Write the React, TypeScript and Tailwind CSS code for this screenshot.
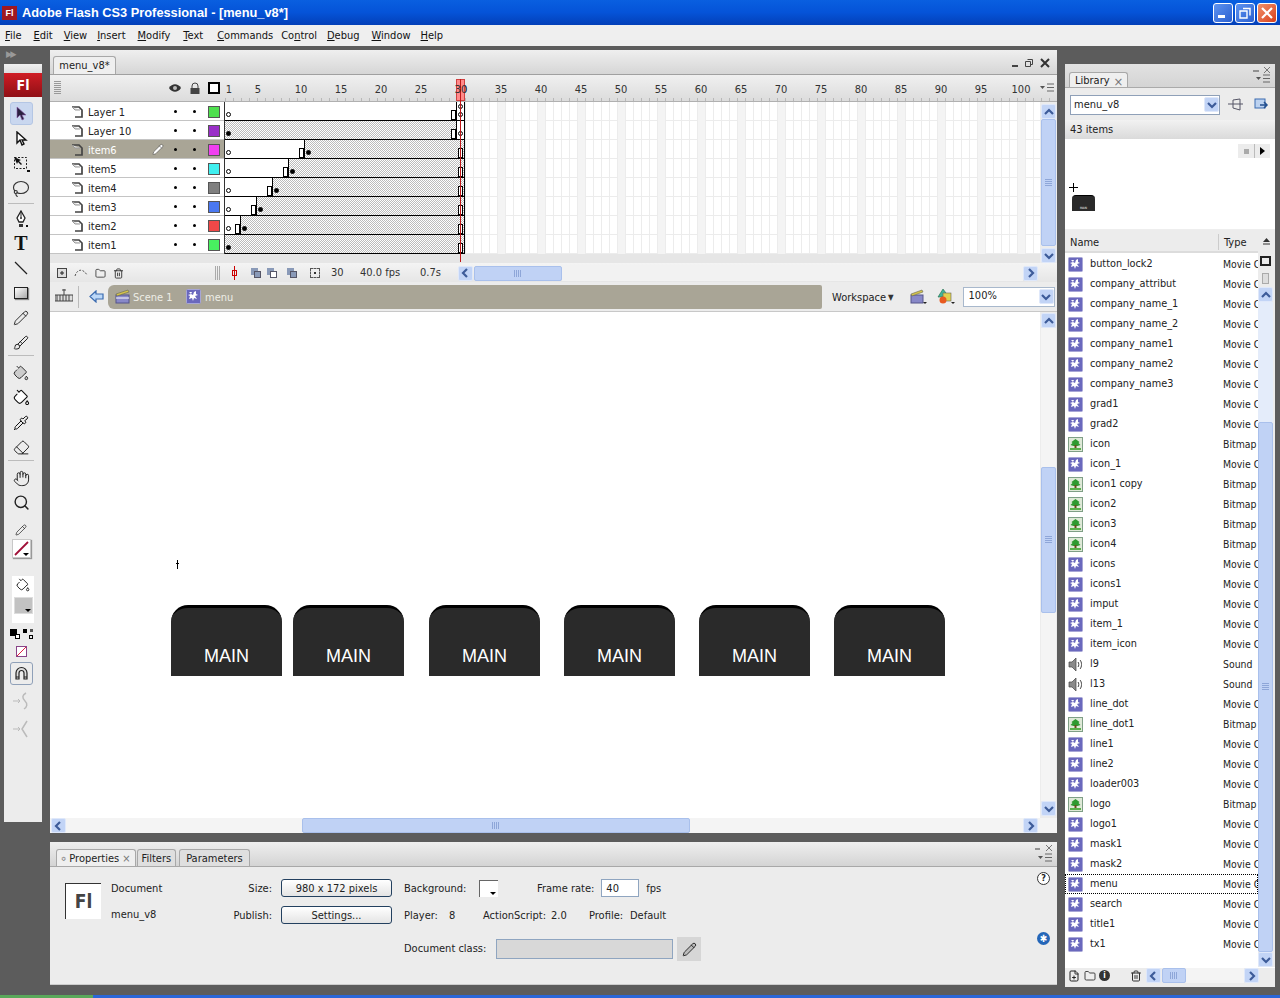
import React from "react";
import { Brush, Eraser, Hand, Lasso, PaintBucket, Pencil, Pipette, Search, Trash2, Folder, FilePlus } from "lucide-react";

const Sym = () => (
  <svg width="15" height="15" viewBox="0 0 15 15" className="shrink-0">
    <rect x="0.5" y="0.5" width="14" height="14" rx="1" fill="#6a68bd" stroke="#a7a6d6" />
    <path d="M3 3h3l-1 2 2 1 1-3 2-1v3l2 1-3 1 2 3-3-1-1 3-1-3-3 1 1-3-2-1 3-1z" fill="#fff" />
  </svg>
);
const Bmp = () => (
  <svg width="15" height="15" viewBox="0 0 15 15" className="shrink-0">
    <rect x="0.5" y="0.5" width="14" height="14" fill="#dfe9d8" stroke="#7f9f86" />
    <path d="M7.500 2l4 3-1 1 2 2-3 1H5.500l-3-1 2-2-1-1z" fill="#2f9a2f" />
    <rect x="6.500" y="8" width="2" height="4" fill="#6b4a1d" />
    <rect x="2" y="11" width="11" height="2" fill="#5ab04a" />
  </svg>
);
const Snd = () => (
  <svg width="15" height="15" viewBox="0 0 15 15" className="shrink-0">
    <path d="M1 5h3l4-4v13l-4-4H1z" fill="#8a8a8a" stroke="#444" strokeWidth="0.7" />
    <path d="M10 5c1 1 1 4 0 5M12 3c2 2 2 7 0 9" fill="none" stroke="#444" />
  </svg>
);

const Arrow = ({ d }: { d: "l" | "r" | "u" | "d" }) => {
  const p = { l: "M7 2L3 6l4 4", r: "M4 2l4 4-4 4", u: "M2 8l4-4 4 4", d: "M2 4l4 4 4-4" }[d];
  return (
    <div className="w-[15px] h-[15px] shrink-0 flex items-center justify-center bg-[#c2d4f6] border border-[#dfe8fa] rounded-[2px]">
      <svg width="12" height="12" viewBox="0 0 12 12">
        <path d={p} fill="none" stroke="#3d5b99" strokeWidth="2.2" />
      </svg>
    </div>
  );
};
const HThumb = ({ cls }: { cls: string }) => (
  <div className={`h-[15px] bg-[#c0d2f5] border border-[#a9c0ec] rounded-[2px] flex items-center justify-center text-[8px] leading-none text-[#8ea6d8] ${cls}`}>
    <div className="w-[8px] h-[7px] bg-[repeating-linear-gradient(to_right,#8ea6d8_0,#8ea6d8_1px,transparent_1px,transparent_2px)]" />
  </div>
);
const VThumb = ({ cls }: { cls: string }) => (
  <div className={`w-[15px] bg-[#c0d2f5] border border-[#a9c0ec] rounded-[2px] flex items-center justify-center ${cls}`}>
    <div className="w-[7px] h-[8px] bg-[repeating-linear-gradient(to_bottom,#8ea6d8_0,#8ea6d8_1px,transparent_1px,transparent_2px)]" />
  </div>
);
const Grip = () => <div className="w-[7px] h-[14px] bg-[repeating-linear-gradient(to_bottom,#999_0,#999_1px,transparent_1px,transparent_2px)]" />;

const WinCtl = () => (
  <div className="flex items-center gap-[6px] text-[#222]">
    <div className="w-[6px] h-[2px] bg-[#444] mt-[6px]" />
    <svg width="10" height="10" viewBox="0 0 10 10"><path d="M3.5 1.5h5v5h-2M1.5 3.5h5v5h-5z" fill="none" stroke="#444" /></svg>
    <svg width="10" height="10" viewBox="0 0 10 10"><path d="M1 1l8 8M9 1l-8 8" stroke="#333" strokeWidth="2" /></svg>
  </div>
);
const PanelMenu = () => (
  <svg width="16" height="9" viewBox="0 0 16 9"><path d="M1 3h5L3.500 6z" fill="#555" /><path d="M8 1h7M8 4.500h7M8 8h7" stroke="#666" /></svg>
);

const layers = [
  { n: "Layer 1", c: "#4fe04f", a: "w", w: 232, last: "dots" },
  { n: "Layer 10", c: "#9a2fc8", a: "h", w: 232, last: "dot" },
  { n: "item6", c: "#f040f0", a: "w", w: 80, sel: true },
  { n: "item5", c: "#40f0f0", a: "w", w: 64 },
  { n: "item4", c: "#7f7f7f", a: "w", w: 48 },
  { n: "item3", c: "#4a78f0", a: "w", w: 32 },
  { n: "item2", c: "#f04848", a: "w", w: 16 },
  { n: "item1", c: "#48f060", a: "h", w: 0 },
];

const Dot = ({ x, y = 10, fill }: { x: number; y?: number; fill?: boolean }) => (
  <div style={{ left: x, top: y }} className={`absolute w-[5px] h-[5px] rounded-full border border-black ${fill ? "bg-black" : "bg-white"}`} />
);
const Rect = ({ x }: { x: number }) => (
  <div style={{ left: x }} className="absolute top-[8px] w-[5px] h-[10px] border border-black bg-white" />
);

const Frames = ({ l }: { l: (typeof layers)[number] }) => {
  const hatch = "bg-[repeating-conic-gradient(#bcbcbc_0_25%,#ffffff_0_50%)] bg-[length:2px_2px]";
  const special = !!l.last;
  return (
    <div className="relative flex w-[240px] h-[19px] border-b border-r border-black bg-white">
      {l.w > 0 && <div style={{ width: l.w }} className={`h-full border-r border-black shrink-0 ${l.a === "h" ? hatch : "bg-white"}`} />}
      <div className={`flex-1 h-full ${special ? "bg-white" : hatch}`} />
      {l.a === "w" && <Dot x={1} />}
      {l.a === "h" && <Dot x={1} fill />}
      {l.w > 0 && <Rect x={l.w - 6} />}
      {!special && l.w > 0 && <Dot x={l.w + 1} fill />}
      {!special && <Rect x={233} />}
      {l.last === "dots" && <><Dot x={233} y={2} /><Dot x={233} y={10} /></>}
      {l.last === "dot" && <Dot x={233} y={10} />}
    </div>
  );
};

const Timeline = () => {
  const labels = [35, 40, 45, 50, 55, 60, 65, 70, 75, 80, 85, 90, 95, 100];
  return (
    <div className="relative h-[232px] bg-[#ececec] shrink-0">
      <div className="h-[25px] flex items-end justify-between pl-[3px] pr-[7px] bg-gradient-to-b from-[#efefef] to-[#d6d6d6] border-b border-[#a0a0a0]">
        <div className="h-[18px] w-[63px] pt-[2px] bg-[#efefef] border border-b-0 border-[#a8a8a8] rounded-t-[3px] flex items-center justify-center text-[11px] text-[#222]">menu_v8*</div>
        <div className="self-center pt-[2px]"><WinCtl /></div>
      </div>
      <div className="h-[27px] flex items-center bg-gradient-to-b from-[#f0f0f0] to-[#dcdcdc] border-b border-[#b0b0b0]">
        <div className="w-[175px] shrink-0 flex items-center pl-[4px]">
          <Grip />
          <svg className="ml-[107px]" width="14" height="10" viewBox="0 0 14 10"><path d="M1 5c3-5 9-5 12 0-3 5-9 5-12 0z" fill="#333" /><circle cx="7" cy="5" r="2" fill="#bbb" /></svg>
          <svg className="ml-[7px]" width="12" height="13" viewBox="0 0 12 13"><path d="M3 6V4a3 3 0 016 0v2" fill="none" stroke="#444" /><rect x="1.500" y="6" width="9" height="6" fill="#444" /></svg>
          <div className="ml-[7px] w-[12px] h-[12px] border-2 border-black bg-white" />
        </div>
        <div className="flex-1 h-full relative flex items-center pt-[4px] text-[11px] text-[#333] bg-[repeating-linear-gradient(to_right,#b8b8b8_0,#b8b8b8_1px,transparent_1px,transparent_8px)] bg-[length:100%_3px] bg-bottom bg-no-repeat">
          <span className="w-[8px] text-center">1</span>
          <span className="w-[40px] ml-[5px] text-center">5</span>
          {[10, 15, 20, 25, 30, ...labels].map((n) => (
            <span key={n} className={`w-[40px] text-center shrink-0 ${n === 10 ? "ml-[3px]" : ""}`}>{n}</span>
          ))}
          <div className="absolute right-[2px] top-[8px]"><PanelMenu /></div>
        </div>
      </div>
      <div className="h-[161px] flex">
        <div className="w-[990px] shrink-0 flex flex-col">
          <div className="flex h-[152px]">
            <div className="w-[174px] shrink-0">
              {layers.map((l) => (
                <div key={l.n} className={`h-[19px] flex items-center pt-[1px] border-b border-[#c4c4c4] text-[11px] ${l.sel ? "bg-[#a9a596] text-white" : "bg-white text-[#222]"}`}>
                  <svg className="ml-[21px] shrink-0" width="12" height="12" viewBox="0 0 12 12"><path d="M1 1h7l3 3v7H4" fill="none" stroke="#444" strokeWidth="1.700" /><path d="M1 1l3 3h5" fill="#ddd" stroke="#999" /></svg>
                  <span className="ml-[5px] w-[64px] pt-[4px]">{l.n}</span>
                  <div className="w-[12px] h-[12px] flex items-center">
                    {l.sel && <Pencil size={13} color="#333" fill="#fff" strokeWidth={1} />}
                  </div>
                  <div className="ml-[10px] w-[3px] h-[3px] rounded-full bg-black" />
                  <div className="ml-[16px] w-[3px] h-[3px] rounded-full bg-black" />
                  <div style={{ backgroundColor: l.c }} className="ml-[12px] w-[12px] h-[12px] border border-[#555]" />
                </div>
              ))}
            </div>
            <div className="shrink-0 border-l border-[#333]">
              {layers.map((l) => <Frames key={l.n} l={l} />)}
            </div>
            <div className="flex-1 bg-white bg-[linear-gradient(to_right,#ececec_1px,transparent_1px),linear-gradient(to_right,transparent_32px,#f4f4f4_32px,#f4f4f4_40px,transparent_40px),linear-gradient(to_bottom,#ececec_1px,transparent_1px)] bg-[size:8px_100%,40px_100%,100%_19px] bg-[position:0_0,0_0,0_18px]" />
          </div>
          <div className="flex-1 bg-[#e6e6e6]" />
        </div>
        <div className="w-[17px] flex flex-col items-center pt-[2px] bg-[#ececec]">
          <Arrow d="u" />
          <VThumb cls="h-[125px] flex-1" />
          <div className="mt-[2px]"><Arrow d="d" /></div>
        </div>
      </div>
      <div className="h-[19px] flex items-center pt-[1px] bg-gradient-to-b from-[#f4f4f4] to-[#e6e6e6] text-[11px] text-[#333]">
        <svg className="ml-[7px]" width="10" height="10" viewBox="0 0 10 10"><rect x="0.5" y="0.5" width="9" height="9" fill="#ddd" stroke="#444" /><path d="M5 3v4M3 5h4" stroke="#222" /></svg>
        <svg className="ml-[7px]" width="14" height="10" viewBox="0 0 14 10"><path d="M1 8C3 1 9 0 13 7" fill="none" stroke="#555" strokeDasharray="2 1.500" /></svg>
        <Folder className="ml-[7px]" size={11} color="#444" fill="#eee" />
        <Trash2 className="ml-[7px]" size={11} color="#333" />
        <div className="ml-[91px] w-[5px] h-[14px] bg-[repeating-linear-gradient(to_right,#aaa_0,#aaa_1px,transparent_1px,transparent_2px)]" />
        <div className="ml-[13px] relative w-[3px] h-[14px]"><div className="absolute left-[1px] w-[1px] h-full bg-[#c00]" /><div className="absolute top-[4px] -left-[1px] w-[5px] h-[6px] border border-[#c00]" /></div>
        {[0, 1, 2].map((i) => (
          <div key={i} className={`relative w-[10px] h-[10px] ${i === 0 ? "ml-[15px]" : i === 1 ? "ml-[6px]" : "ml-[10px]"}`}>
            <div className="absolute left-0 top-0 w-[7px] h-[7px] bg-[#8a9ab8]" />
            <div className={`absolute right-0 bottom-0 w-[7px] h-[7px] border border-[#556] ${i === 1 ? "bg-white" : "bg-[#8a9ab8]"}`} />
          </div>
        ))}
        <div className="ml-[13px] w-[10px] h-[10px] border border-[#555] border-dashed flex items-center justify-center"><div className="w-[2px] h-[2px] bg-[#333]" /></div>
        <span className="ml-[11px] w-[29px]">30</span>
        <span className="w-[60px]">40.0 fps</span>
        <span className="w-[38px]">0.7s</span>
        <Arrow d="l" />
        <HThumb cls="ml-[1px] w-[88px]" />
        <div className="flex-1 bg-[#f2f2f2] h-[15px]" />
        <Arrow d="r" />
        <div className="w-[19px]" />
      </div>
      <div className="absolute left-[406px] top-[29px] w-[9px] h-[22px] bg-[#ff8a8a] border border-[#d04040]" />
      <div className="absolute left-[410px] top-[29px] h-[183px] w-[1px] bg-[#c01818]" />
      <div className="absolute left-[402px] top-[32px] w-[18px] text-center text-[11px] text-[#333]">30</div>
    </div>
  );
};

const EditBar = () => (
  <div className="h-[30px] flex items-center bg-[#ececec] text-[11px] shrink-0 border-b border-[#c8c8c8]">
    <svg className="ml-[5px]" width="18" height="18" viewBox="0 0 18 18"><path d="M0 7h18v6H0zM9 1v6M7 2h4" fill="#ddd" stroke="#444" /><path d="M2 7v6M5 7v6M8 7v6M11 7v6M14 7v6" stroke="#444" /></svg>
    <div className="ml-[5px] w-[1px] h-[22px] bg-[#bbb]" />
    <svg className="ml-[10px]" width="15" height="13" viewBox="0 0 15 13"><path d="M7 1L1 6.500 7 12V9h7V4H7z" fill="#bcd8f8" stroke="#3a6bb0" strokeWidth="1.200" /></svg>
    <div className="ml-[4px] w-[714px] h-[24px] bg-[#a9a596] rounded-l-[6px] rounded-r-[2px] flex items-center pl-[7px] text-[#eeeee6] whitespace-nowrap">
      <svg width="15" height="15" viewBox="0 0 15 15"><rect x="1" y="6" width="13" height="8" fill="#8888c8" stroke="#55558a" /><path d="M1 5l12-4 1 2L2 7z" fill="#d4c34a" stroke="#665" strokeWidth="0.6" /><path d="M1 9h13" stroke="#fff" /></svg>
      <span className="ml-[3px] w-[38px] pt-[3px]">Scene 1</span>
      <span className="ml-[15px]"><Sym /></span>
      <span className="ml-[4px] pt-[3px]">menu</span>
    </div>
    <span className="ml-[10px] text-[#222] pt-[3px]">Workspace</span>
    <span className="ml-[2px] text-[8px] text-[#333] pt-[3px]">▼</span>
    <svg className="ml-[16px]" width="17" height="17" viewBox="0 0 17 17"><rect x="1" y="7" width="12" height="8" fill="#8888c8" stroke="#55558a" /><path d="M1 6l11-4 1 2L2 8z" fill="#d4c34a" stroke="#665" strokeWidth="0.6" /><path d="M13 14h4l-2 2z" fill="#222" /></svg>
    <svg className="ml-[10px]" width="18" height="17" viewBox="0 0 18 17"><path d="M6 1l6 8H1z" fill="#3fb59a" stroke="#264" strokeWidth="0.6" /><rect x="6" y="5" width="8" height="8" fill="#e0d050" stroke="#665" strokeWidth="0.6" /><circle cx="6" cy="12" r="3.500" fill="#e85a20" /><path d="M14 14h4l-2 2z" fill="#222" /></svg>
    <div className="ml-[8px] w-[92px] h-[20px] bg-white border border-[#a8b8cc] flex items-center pl-[5px] text-[#222]">
      <span className="flex-1">100%</span>
      <Arrow d="d" />
    </div>
  </div>
);

const Tab = ({ children, active, cls = "" }: { children: React.ReactNode; active?: boolean; cls?: string }) => (
  <div className={`h-[17px] px-[4px] pt-[2px] border border-b-0 border-[#a8a8a8] rounded-t-[3px] flex items-center text-[11px] text-[#222] ${active ? "bg-[#efefef]" : "bg-[#dfdfdf]"} ${cls}`}>{children}</div>
);

const Stage = () => {
  const btns = ["ml-[121px]", "ml-[11px]", "ml-[25px]", "ml-[24px]", "ml-[24px]", "ml-[24px]"];
  return (
    <div className="flex-1 flex flex-col min-h-0">
      <div className="flex-1 flex min-h-0">
        <div className="relative w-[990px] shrink-0 bg-white flex items-start pt-[293px]">
          <div className="absolute left-[126px] top-[248px] w-[3px] h-[9px]">
            <div className="absolute left-[1px] w-[1px] h-full bg-black" />
            <div className="absolute top-[3px] w-[3px] h-[1px] bg-black" />
          </div>
          {btns.map((m, i) => (
            <div key={i} className={`${m} w-[111px] h-[71px] shrink-0 rounded-t-[17px] bg-[#2a2a2a] border-t-[3px] border-black flex items-end justify-center pb-[8px] text-white text-[18px] leading-[24px] font-['Liberation_Sans',sans-serif]`}>MAIN</div>
          ))}
        </div>
        <div className="flex-1 flex flex-col items-center pt-[1px] pb-[2px] bg-[#ececec]">
          <Arrow d="u" />
          <div className="h-[139px] shrink-0 w-[15px] bg-[#f4f4f4]" />
          <VThumb cls="h-[146px] shrink-0" />
          <div className="flex-1 w-[15px] bg-[#f4f4f4]" />
          <Arrow d="d" />
        </div>
      </div>
      <div className="h-[15px] flex bg-[#f4f4f4] shrink-0">
        <div className="ml-[1px]"><Arrow d="l" /></div>
        <div className="w-[236px]" />
        <HThumb cls="w-[388px]" />
        <div className="w-[333px]" />
        <Arrow d="r" />
      </div>
    </div>
  );
};

const Properties = () => (
  <div className="h-[143px] shrink-0 bg-[#ececec] flex flex-col border-b border-[#ccc] text-[11px] text-[#222]">
    <div className="h-[25px] shrink-0 relative flex items-end gap-[1px] pl-[6px] bg-gradient-to-b from-[#efefef] to-[#d4d4d4] border-b border-[#a8a8a8]">
      <Tab active><span className="text-[7px] mr-[3px] text-[#666]">≎</span>Properties<span className="ml-[3px] text-[#777]">×</span></Tab>
      <Tab>Filters</Tab>
      <Tab cls="ml-[2px] !px-[6px]">Parameters</Tab>
      <div className="absolute right-[4px] top-[2px] flex flex-col items-end gap-[1px]">
        <svg width="22" height="8" viewBox="0 0 22 8"><path d="M4 5h5" stroke="#777" strokeWidth="1.500" /><path d="M15 1l6 6M21 1l-6 6" stroke="#777" /></svg>
        <PanelMenu />
      </div>
    </div>
    <div className="flex-1 flex relative pt-[12px] pl-[15px]">
      <div className="w-[36px] h-[36px] mt-[4px] bg-white border-l border-t border-[#333] flex items-center justify-center font-bold text-[19px] text-[#444] font-['DejaVu_Sans_Condensed',sans-serif]">Fl</div>
      <div className="ml-[10px] w-[100px]">
        <div className="h-[18px] leading-[18px] pt-[1px]">Document</div>
        <div className="h-[18px] mt-[8px] leading-[18px] pt-[1px]">menu_v8</div>
      </div>
      <div className="w-[61px] text-right">
        <div className="h-[18px] leading-[18px] pt-[1px]">Size:</div>
        <div className="h-[18px] mt-[9px] leading-[18px] pt-[1px]">Publish:</div>
      </div>
      <div className="ml-[9px] w-[111px]">
        {["980 x 172 pixels", "Settings..."].map((t, i) => (
          <div key={t} className={`h-[18px] leading-[17px] text-center border border-[#23405f] rounded-[3px] bg-gradient-to-b from-white to-[#e4e4e4] ${i ? "mt-[9px]" : ""}`}>{t}</div>
        ))}
      </div>
      <div className="ml-[12px] flex flex-col">
        <div className="flex items-center h-[18px]">
          <span className="w-[75px] pt-[2px]">Background:</span>
          <div className="w-[19px] h-[17px] bg-white border-l border-t border-[#666] relative flex items-end justify-end pr-[2px] pb-[2px]"><div className="border-x-[3px] border-x-transparent border-t-[3px] border-t-black" /></div>
          <span className="ml-[39px] pt-[2px]">Frame rate:</span>
          <div className="ml-[7px] w-[38px] h-[18px] pl-[4px] leading-[17px] bg-white border border-[#8fa5c0]">40</div>
          <span className="ml-[7px] pt-[2px]">fps</span>
        </div>
        <div className="flex items-center h-[18px] mt-[9px] pt-[2px]">
          <span className="w-[45px]">Player:</span><span className="w-[34px]">8</span>
          <span className="w-[68px]">ActionScript:</span><span className="w-[38px]">2.0</span>
          <span className="w-[41px]">Profile:</span><span>Default</span>
        </div>
        <div className="flex items-center mt-[13px]">
          <span className="w-[92px]">Document class:</span>
          <div className="w-[177px] h-[20px] bg-[#d8d8d8] border border-[#8fa5c0]" />
          <div className="ml-[4px] w-[24px] h-[24px] bg-[#d6d6d6] flex items-center justify-center"><Pencil size={15} color="#222" fill="#bbb" strokeWidth={1.500} /></div>
        </div>
      </div>
      <div className="absolute right-[7px] top-[5px] w-[13px] h-[13px] rounded-full border border-[#333] bg-white flex items-center justify-center text-[9px] font-bold leading-none">?</div>
      <div className="absolute right-[7px] top-[65px] w-[13px] h-[13px] rounded-full bg-[#2466b8] flex items-center justify-center text-white text-[10px] leading-none">✱</div>
    </div>
  </div>
);

const M = "Movie C", B = "Bitmap", S = "Sound";
const items: [string, string][] = [
  ["button_lock2", M], ["company_attribut", M], ["company_name_1", M], ["company_name_2", M], ["company_name1", M], ["company_name2", M], ["company_name3", M],
  ["grad1", M], ["grad2", M], ["icon", B], ["icon_1", M], ["icon1 copy", B], ["icon2", B], ["icon3", B], ["icon4", B], ["icons", M], ["icons1", M], ["imput", M],
  ["item_1", M], ["item_icon", M], ["l9", S], ["l13", S], ["line_dot", M], ["line_dot1", B], ["line1", M], ["line2", M], ["loader003", M], ["logo", B], ["logo1", M],
  ["mask1", M], ["mask2", M], ["menu", M], ["search", M], ["title1", M], ["tx1", M],
];

const Library = () => (
  <div className="w-[210px] ml-[8px] mt-[18px] h-[923px] bg-[#ececec] flex flex-col rounded-t-[3px] text-[11px] text-[#222] shrink-0">
    <div className="h-[24px] shrink-0 flex items-end relative pl-[4px] bg-gradient-to-b from-[#e2e2e2] to-[#d4d4d4] border-b border-[#aaa]">
      <Tab active cls="!h-[15px]"><span className="px-[1px] pt-[1px]">Library</span><span className="ml-[3px] text-[13px] leading-none text-[#777]">×</span></Tab>
      <div className="absolute right-[4px] top-[2px] flex flex-col items-end">
        <svg width="22" height="8" viewBox="0 0 22 8"><path d="M4 5h6" stroke="#777" strokeWidth="1.500" /><path d="M15 1l6 6M21 1l-6 6" stroke="#777" /></svg>
        <PanelMenu />
      </div>
    </div>
    <div className="h-[32px] shrink-0 flex items-center pl-[5px] pt-[1px]">
      <div className="w-[150px] h-[20px] bg-white border border-[#8fa0b8] flex items-center pl-[3px]">
        <span className="flex-1 pt-[1px]">menu_v8</span><Arrow d="d" />
      </div>
      <svg className="ml-[8px]" width="15" height="13" viewBox="0 0 15 13"><path d="M0 6h15M5 2v8l7 2V1z" fill="none" stroke="#556" /></svg>
      <svg className="ml-[11px]" width="15" height="13" viewBox="0 0 15 13"><rect x="1" y="1" width="10" height="9" fill="#bcd2f0" stroke="#3a6bb0" /><path d="M6 7h6M10 4l3 3-3 3" fill="none" stroke="#24508f" strokeWidth="1.500" /></svg>
    </div>
    <div className="h-[19px] shrink-0 pl-[5px] leading-[19px] bg-gradient-to-b from-[#f2f2f2] to-[#dadada]">43 items</div>
    <div className="h-[91px] shrink-0 bg-white relative border-b border-[#eee]">
      <div className="absolute right-[5px] top-[5px] flex">
        <div className="w-[16px] h-[14px] bg-[#ececec] flex items-center justify-center"><div className="w-[5px] h-[5px] bg-[#aaa]" /></div>
        <div className="w-[16px] h-[14px] bg-[#ececec] border-l border-[#bbb] flex items-center justify-center"><div className="border-y-[4px] border-y-transparent border-l-[5px] border-l-black" /></div>
      </div>
      <div className="absolute left-[4px] top-[44px] w-[9px] h-[9px]">
        <div className="absolute left-[4px] w-[1px] h-full bg-black" /><div className="absolute top-[4px] w-full h-[1px] bg-black" />
      </div>
      <div className="absolute left-[7px] top-[56px] w-[23px] h-[16px] rounded-t-[4px] bg-[#2a2a2a] border-t border-black flex items-end justify-center text-[3px] leading-[5px] text-white">MAIN</div>
    </div>
    <div className="h-[23px] shrink-0 flex">
      <div className="flex-1 flex items-center bg-[#ececec] border-b-[2px] border-[#dcdcdc] pl-[5px] pt-[3px]">
        <span className="w-[148px] pt-[2px]">Name</span>
        <div className="w-[1px] h-[16px] bg-[#ccc]" />
        <span className="ml-[5px] pt-[2px]">Type</span>
      </div>
      <div className="w-[17px] flex items-center justify-center">
        <svg width="9" height="9" viewBox="0 0 9 9"><path d="M4.500 1L8 5H1z" fill="#333" /><path d="M1 7h7" stroke="#333" /></svg>
      </div>
    </div>
    <div className="flex-1 flex min-h-0">
      <div className="w-[193px] shrink-0 bg-white overflow-hidden text-[10.8px] pt-[1px]">
        {items.map(([n, t]) => {
          const sel = n === "menu";
          return (
            <div key={n} className={`h-[20px] flex items-center pl-[3px] whitespace-nowrap ${sel ? "outline-1 outline-dotted outline-black -outline-offset-1" : ""}`}>
              {t === M ? <Sym /> : t === B ? <Bmp /> : <Snd />}
              <span className="ml-[7px] w-[133px] pt-[1px]">{n}</span>
              <span className="overflow-hidden w-[35px] pt-[1px] text-[10.4px]">{t}</span>
            </div>
          );
        })}
      </div>
      <div className="flex-1 flex flex-col items-start bg-[#ececec]">
        <div className="w-[15px] h-[16px] flex items-center justify-center"><div className="w-[11px] h-[10px] border-2 border-[#222]" /></div>
        <div className="w-[15px] h-[18px] flex items-center justify-center"><div className="w-[7px] h-[11px] border border-[#aaa] bg-[#ddd]" /></div>
        <Arrow d="u" />
        <div className="w-[15px] h-[120px] bg-[#e4ecfa]" />
        <VThumb cls="flex-1" />
        <Arrow d="d" />
      </div>
    </div>
    <div className="h-[20px] shrink-0 flex items-center pl-[3px] pb-[4px] bg-[#ececec] border-t border-white">
      <FilePlus size={12} color="#222" />
      <Folder className="ml-[4px]" size={12} color="#444" fill="#eee" />
      <div className="ml-[3px] w-[11px] h-[11px] rounded-full bg-[#333] text-white text-[8px] leading-[11px] text-center font-bold">i</div>
      <Trash2 className="ml-[20px]" size={12} color="#333" />
      <div className="ml-[4px]"><Arrow d="l" /></div>
      <HThumb cls="w-[24px] ml-[1px]" />
      <div className="w-[58px] h-[15px] bg-[#f4f4f4]" />
      <Arrow d="r" />
    </div>
  </div>
);

const IconWrap = ({ children, cls = "" }: { children: React.ReactNode; cls?: string }) => (
  <div className={`h-[25px] pr-[4px] flex items-center justify-center ${cls}`}>{children}</div>
);

const Sep = () => <div className="h-[1px] ml-[4px] mr-[8px] bg-[#bcbcbc]" />;

const Tools = () => (
  <div className="w-[50px] shrink-0 flex flex-col">
    <div className="h-[18px] pl-[6px] flex items-center text-[#999] text-[9px] tracking-[-2px]">▶▶</div>
    <div className="ml-[4px] w-[38px] h-[758px] bg-[#ececec] rounded-t-[3px]">
      <div className="h-[9px] bg-gradient-to-b from-[#f0f0f0] to-[#ddd]" />
      <div className="h-[24px] -mx-[0px] bg-gradient-to-b from-[#d01c24] to-[#8f1016] text-white font-bold text-[14px] leading-[24px] text-center font-['DejaVu_Sans_Condensed',sans-serif]">Fl</div>
      <div className="h-[4px]" />
      <div className="h-[25px] pr-[4px] flex items-center justify-center">
        <div className="w-[23px] h-[23px] rounded-[3px] bg-[#c9d7ef] border border-[#b4c6e4] flex items-center justify-center">
          <svg width="13" height="15" viewBox="0 0 13 15"><path d="M2 1v11l3-3 2 5 2-1-2-4h4z" fill="#2b2140" stroke="#8a5aa8" strokeWidth="0.6" /></svg>
        </div>
      </div>
      <IconWrap><svg width="13" height="15" viewBox="0 0 13 15"><path d="M2 1v11l3-3 2 5 2-1-2-4h4z" fill="#fff" stroke="#111" strokeWidth="1.400" /></svg></IconWrap>
      <IconWrap><svg width="18" height="17" viewBox="0 0 18 17"><rect x="2.500" y="2.500" width="12" height="11" fill="none" stroke="#222" strokeDasharray="2 1.500" /><path d="M2 2l7 3-2 1 3 3-1 1-3-3-1 2z" fill="#111" /><path d="M15 15h3v2h-3z" fill="#111" /></svg></IconWrap>
      <IconWrap><Lasso size={18} color="#333" strokeWidth={1.500} /></IconWrap>
      <div className="h-[2px]" /><Sep /><div className="h-[2px]" />
      <IconWrap><svg width="14" height="18" viewBox="0 0 14 18"><path d="M7 1l4 7-2 4H5L3 8z" fill="#fff" stroke="#222" strokeWidth="1.300" /><path d="M7 1v6" stroke="#222" /><circle cx="7" cy="8" r="1" fill="#222" /><path d="M5 14h4v3H5z" fill="#333" /><path d="M12 15h2v2h-2z" fill="#111" /></svg></IconWrap>
      <IconWrap cls="-mt-[1px]"><span className="font-['Liberation_Serif',serif] font-bold text-[20px] text-[#111] leading-none">T</span></IconWrap>
      <IconWrap><svg width="14" height="14" viewBox="0 0 14 14"><path d="M1 1l12 12" stroke="#222" strokeWidth="1.300" /></svg></IconWrap>
      <IconWrap><div className="w-[14px] h-[12px] border border-[#222] bg-gradient-to-br from-white to-[#aaa] shadow-[1px_1px_1px_#888]" /></IconWrap>
      <IconWrap><Pencil size={16} color="#222" strokeWidth={1.400} /></IconWrap>
      <IconWrap><Brush size={16} color="#222" strokeWidth={1.500} /></IconWrap>
      <Sep />
      <IconWrap cls="mt-[4px]"><PaintBucket size={16} color="#222" fill="#ccc" strokeWidth={1.400} /></IconWrap>
      <IconWrap><PaintBucket size={17} color="#111" fill="#fff" strokeWidth={1.500} /></IconWrap>
      <IconWrap><Pipette size={16} color="#111" strokeWidth={1.500} /></IconWrap>
      <IconWrap><Eraser size={17} color="#222" strokeWidth={1.400} /></IconWrap>
      <Sep />
      <IconWrap cls="mt-[5px]"><Hand size={17} color="#222" strokeWidth={1.400} /></IconWrap>
      <IconWrap cls="-mt-[1px]"><Search size={17} color="#222" strokeWidth={2} /></IconWrap>
      <div className="h-[5px]" />
      <IconWrap cls="!h-[19px]"><Pencil size={12} color="#222" strokeWidth={1.400} /></IconWrap>
      <div className="flex justify-center pr-[4px]"><div className="relative w-[19px] h-[19px] bg-white border border-[#c8c8c8] shadow-[1px_1px_1px_#999] overflow-hidden"><svg width="17" height="17" viewBox="0 0 17 17"><path d="M2 15L15 2" stroke="#a01038" strokeWidth="1.800" /></svg><div className="absolute right-[1px] bottom-[1px] border-x-[3px] border-x-transparent border-t-[3px] border-t-black" /></div></div>
      <div className="h-[18px]" />
      <div className="ml-[8px] bg-white pt-[2px] flex flex-col items-center w-[22px] h-[47px]">
        <PaintBucket size={14} color="#111" fill="#fff" strokeWidth={1.500} />
        <div className="relative mt-[5px] w-[19px] h-[17px] bg-[#c2c2c2] border border-[#ddd]"><div className="absolute right-[1px] bottom-[1px] border-x-[3px] border-x-transparent border-t-[3px] border-t-black" /></div>
      </div>
      <div className="flex justify-center gap-[3px] mt-[6px] pr-[4px]">
        <div className="relative w-[10px] h-[10px]"><div className="absolute w-[7px] h-[7px] bg-black" /><div className="absolute right-0 bottom-0 w-[5px] h-[5px] border border-black bg-white" /></div>
        <div className="relative w-[10px] h-[10px]"><div className="absolute w-[4px] h-[4px] bg-black" /><div className="absolute right-0 bottom-0 w-[4px] h-[4px] border border-black" /><div className="absolute right-0 top-0 w-[3px] h-[3px] bg-[#555]" /></div>
      </div>
      <div className="flex justify-center mt-[7px] pr-[4px]"><div className="w-[11px] h-[11px] border border-[#884488] bg-white overflow-hidden"><svg width="9" height="9" viewBox="0 0 9 9"><path d="M0 9L9 0" stroke="#e02040" /></svg></div></div>
      <div className="flex justify-center mt-[5px] pr-[4px]"><div className="w-[23px] h-[23px] rounded-[3px] border border-[#8fa0b8] flex items-center justify-center"><svg width="15" height="16" viewBox="0 0 15 16"><path d="M2 13V7a5.500 5.500 0 0111 0v6h-3V7a2.500 2.500 0 00-5 0v6z" fill="#ddd" stroke="#222" strokeWidth="1.200" /><path d="M2 11h3M10 11h3" stroke="#222" /></svg></div></div>
      <div className="mt-[4px] pr-[4px] flex flex-col items-center gap-[10px] pt-[3px]">
        <svg width="18" height="18" viewBox="0 0 18 18"><path d="M1 9h7M6 7l2 2-2 2" stroke="#bbb" fill="none" /><path d="M14 1c-4 2-4 5-1 8s2 6-1 8" stroke="#bbb" strokeWidth="1.500" fill="none" /></svg>
        <svg width="18" height="18" viewBox="0 0 18 18"><path d="M1 9h7M6 7l2 2-2 2" stroke="#bbb" fill="none" /><path d="M15 1L10 9l5 8" stroke="#bbb" strokeWidth="1.500" fill="none" /></svg>
      </div>
    </div>
  </div>
);

const menus: [string, string, string, string][] = [
  ["", "F", "ile", "ml-[5px]"], ["", "E", "dit", "ml-[12px]"], ["", "V", "iew", "ml-[11px]"], ["", "I", "nsert", "ml-[10px]"], ["", "M", "odify", "ml-[12px]"],
  ["", "T", "ext", "ml-[13px]"], ["", "C", "ommands", "ml-[14px]"], ["Co", "n", "trol", "ml-[8px]"], ["", "D", "ebug", "ml-[10px]"], ["", "W", "indow", "ml-[12px]"], ["", "H", "elp", "ml-[10px]"],
];

export default function App() {
  return (
    <div className="w-[1280px] h-[998px] overflow-hidden flex flex-col bg-[#5c5c5c] font-['DejaVu_Sans_Condensed','Liberation_Sans',sans-serif]">
      <div className="h-[25px] shrink-0 flex items-center bg-gradient-to-b from-[#0a5fe0] via-[#0553d8] to-[#0340b8]">
        <div className="ml-[2px] w-[15px] h-[14px] bg-[#a01820] text-white text-[9px] font-bold text-center leading-[14px] font-['Liberation_Sans',sans-serif]">Fl</div>
        <div className="ml-[5px] pt-[1px] text-white font-bold text-[12.8px] font-['Liberation_Sans',sans-serif] whitespace-nowrap">Adobe Flash CS3 Professional - [menu_v8*]</div>
        <div className="ml-auto mr-[3px] flex gap-[2px]">
          <div className="w-[20px] h-[20px] rounded-[3px] border border-white bg-gradient-to-br from-[#5f93f0] to-[#2a5fd0] flex items-end pl-[4px] pb-[4px]"><div className="w-[7px] h-[3px] bg-white" /></div>
          <div className="w-[20px] h-[20px] rounded-[3px] border border-white bg-gradient-to-br from-[#5f93f0] to-[#2a5fd0] flex items-center justify-center"><svg width="12" height="12" viewBox="0 0 12 12"><path d="M4 1.500h7v7M1 4h7v7H1z" fill="none" stroke="#fff" strokeWidth="1.400" /></svg></div>
          <div className="w-[20px] h-[20px] rounded-[3px] border border-white bg-gradient-to-br from-[#f0906a] to-[#d83c14] flex items-center justify-center"><svg width="12" height="12" viewBox="0 0 12 12"><path d="M1 1l10 10M11 1L1 11" stroke="#fff" strokeWidth="2.200" /></svg></div>
        </div>
      </div>
      <div className="h-[21px] shrink-0 flex items-center pt-[1px] bg-[#efefef] text-[11px] text-[#111]">
        {menus.map(([p, u, r, m]) => (
          <span key={u + r} className={m}>{p}<span className="underline">{u}</span>{r}</span>
        ))}
      </div>
      <div className="flex-1 flex min-h-0">
        <Tools />
        <div className="w-[1007px] shrink-0 pt-[4px] h-[939px] flex flex-col">
          <Timeline />
          <EditBar />
          <Stage />
          <div className="h-[9px] shrink-0" />
          <Properties />
        </div>
        <Library />
      </div>
      <div className="h-[3px] shrink-0 flex bg-[#2a66d8]">
        <div className="w-[93px] bg-[#5aa85a]" />
      </div>
    </div>
  );
}
